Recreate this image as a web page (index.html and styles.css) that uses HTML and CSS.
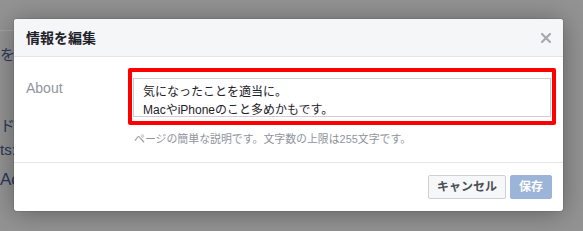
FILE: index.html
```html
<!DOCTYPE html>
<html lang="ja">
<head>
<meta charset="utf-8">
<title>情報を編集</title>
<link rel="stylesheet" href="styles.css">
</head>
<body>
<div class="page">
  <div class="page-rule"></div>
  <div class="page-text t1">を入</div>
  <div class="page-text t2">ドレ</div>
  <div class="page-text t3">ts:</div>
  <div class="page-text t4">Ac</div>
</div>
<div class="dialog">
  <div class="dialog-header">
    <div class="dialog-title">情報を編集</div>
    <svg class="close" width="10" height="10" viewBox="0 0 10 10" aria-label="閉じる">
      <path d="M1 1 L9 9 M9 1 L1 9" stroke="#a6a9b0" stroke-width="2.2" stroke-linecap="square"/>
    </svg>
  </div>
  <div class="dialog-body">
    <div class="field-label">About</div>
    <div class="field">
      <div class="textbox">気になったことを適当に。<br>MacやiPhoneのこと多めかもです。</div>
      <div class="hint">ページの簡単な説明です。文字数の上限は255文字です。</div>
    </div>
  </div>
  <div class="dialog-footer">
    <button class="btn btn-cancel">キャンセル</button>
    <button class="btn btn-save">保存</button>
  </div>
  <div class="highlight"></div>
</div>
</body>
</html>
```
FILE: styles.css
```css
html, body {
  margin: 0;
  padding: 0;
}
body {
  width: 583px;
  height: 231px;
  overflow: hidden;
  background: #939393;
  font-family: "Liberation Sans", "Noto Sans CJK JP", sans-serif;
  position: relative;
}
.page {
  padding-top: 30px;
}
.page-rule {
  height: 1px;
  background: #a2a2a2;
  width: 40px;
}
.page-text {
  color: #2a3859;
  font-size: 15px;
  line-height: 20px;
  white-space: nowrap;
}
.t1 { margin-top: 14px; }
.t2 { margin-top: 51px; }
.t3 { margin-top: 4px; }
.t4 { margin-top: 10px; font-size: 17px; }

.dialog {
  position: absolute;
  left: 14px;
  top: 19px;
  width: 549px;
  background: #fff;
  border-radius: 3px;
  box-shadow: 0 2px 26px rgba(0, 0, 0, 0.35), 0 0 0 1px rgba(0, 0, 0, 0.08);
}
.dialog-header {
  height: 37px;
  background: #f5f6f7;
  border-bottom: 1px solid #e5e5e5;
  border-radius: 3px 3px 0 0;
  display: flex;
  align-items: center;
  justify-content: space-between;
  padding: 0 12px;
}
.dialog-title {
  font-size: 14px;
  font-weight: bold;
  color: #1d2129;
  line-height: 18px;
}
.close {
  display: block;
}
.dialog-body {
  display: grid;
  grid-template-columns: 107px 1fr;
  padding: 21px 12px 16px 12px;
}
.field-label {
  font-size: 14px;
  line-height: 18px;
  color: #90949c;
  padding-top: 1px;
}
.textbox {
  height: 39px;
  box-sizing: border-box;
  border: 1px solid #ccd0d5;
  padding: 4px 8px 0 9px;
  font-size: 12px;
  line-height: 18px;
  color: #1d2129;
  overflow: hidden;
}
.hint {
  margin-top: 15px;
  font-size: 10.9px;
  line-height: 14px;
  color: #90949c;
  padding-left: 1px;
}
.dialog-footer {
  border-top: 1px solid #e5e5e5;
  height: 48px;
  display: flex;
  align-items: center;
  justify-content: flex-end;
  gap: 4px;
  padding: 0 11px 0 12px;
}
.btn {
  height: 24px;
  box-sizing: border-box;
  border-radius: 2px;
  font-family: inherit;
  font-size: 12px;
  font-weight: bold;
  line-height: 22px;
  padding: 0 8px;
  margin: 0;
}
.btn-cancel {
  background: #f6f7f9;
  border: 1px solid #ced0d4;
  color: #4b4f56;
}
.btn-save {
  background: #9cb4d8;
  border: 1px solid #9cb4d8;
  color: #fff;
}
.highlight {
  position: absolute;
  left: 114px;
  top: 49px;
  width: 428px;
  height: 57px;
  box-sizing: border-box;
  border: 4px solid #ff0000;
  border-radius: 2px;
  pointer-events: none;
}
```
